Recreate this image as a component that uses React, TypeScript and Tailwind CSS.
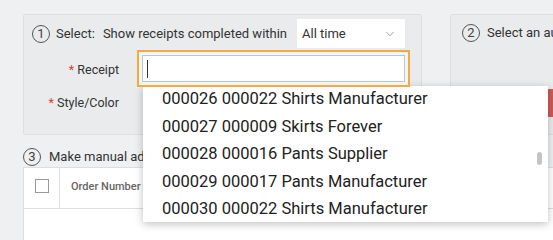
import { ChevronDown } from 'lucide-react'

const items = [
  '000026 000022 Shirts Manufacturer',
  '000027 000009 Skirts Forever',
  '000028 000016 Pants Supplier',
  '000029 000017 Pants Manufacturer',
  '000030 000022 Shirts Manufacturer',
]

function Step({ n }: { n: number }) {
  return (
    <span className="flex h-[18px] w-[18px] shrink-0 items-center justify-center rounded-full border border-[#555] text-[13px] leading-none text-[#444]">
      {n}
    </span>
  )
}

export default function App() {
  return (
    <div
      className="relative h-[240px] w-[553px] overflow-hidden bg-[#eef0f1] text-[#333]"
      style={{ fontFamily: 'Roboto, "Liberation Sans", sans-serif' }}
    >
      <div className="flex gap-[28px] pl-[23px] pt-[14px]">
        {/* panel 1 */}
        <div className="h-[121px] w-[399px] shrink-0 rounded-[2px] border border-[#dde0e2] bg-[#e9ebec]">
          <div className="mt-[4px] flex h-[29px] items-center whitespace-nowrap pl-[8px]">
            <Step n={1} />
            <span className="ml-[6px] text-[13px]">Select:</span>
            <span className="ml-[8px] text-[13px]">Show receipts completed within</span>
            <div className="ml-auto mr-[16px] flex h-[29px] w-[108px] shrink-0 items-center justify-between bg-white pl-[5px] pr-[8px] text-[13px]">
              <span>All time</span>
              <ChevronDown className="h-[14px] w-[14px] text-[#999]" strokeWidth={1.5} />
            </div>
          </div>
          <div className="mt-[2px] flex items-center">
            <div className="w-[95px] whitespace-nowrap pt-[4px] text-right text-[12.5px]">
              <span className="text-[#e0393e]">*</span> Receipt
            </div>
            <div className="relative z-20 ml-[18px] h-[37px] w-[273px] border-2 border-[#f2a94a] bg-[#fdf5ea] p-[3px]">
              <div className="flex h-full w-full items-center border border-[#a9c8e8] bg-white pl-[4px]">
                <span className="h-[18px] w-px bg-[#333]" />
              </div>
            </div>
          </div>
          <div className="mt-[1px] flex">
            <div className="w-[95px] whitespace-nowrap pt-[6px] text-right text-[12.5px]">
              <span className="text-[#e0393e]">*</span> Style/Color
            </div>
          </div>
        </div>

        {/* panel 2 */}
        <div className="h-[121px] w-[200px] shrink-0 rounded-[2px] border border-[#dde0e2] bg-[#e9ebec]">
          <div className="mt-[8px] flex items-center whitespace-nowrap pl-[11px]">
            <Step n={2} />
            <span className="ml-[7px] text-[13px]">Select an audit</span>
          </div>
          <div className="ml-[96px] mt-[46px] h-[28px] w-[90px] rounded-[2px] bg-[#cf5a55]" />
        </div>
      </div>

      {/* step 3 */}
      <div className="mt-[12px] flex items-center whitespace-nowrap pl-[23px]">
        <Step n={3} />
        <span className="ml-[8px] text-[13px]">Make manual adjustments</span>
      </div>
      <div className="ml-[23px] w-[560px] border border-[#dcdfe1] bg-white">
        <div className="flex h-[41px] items-center border-b border-[#dcdfe1]">
          <div className="flex h-full w-[36px] items-center justify-center border-r border-[#dcdfe1]">
            <span className="mb-[3px] h-[14px] w-[14px] border border-[#999] bg-white" />
          </div>
          <span className="ml-[11px] whitespace-nowrap text-[11px] font-medium text-[#666]">Order Number</span>
          <span className="ml-[392px] text-[11px] font-medium text-[#666]">b</span>
        </div>
        <div className="h-[40px]" />
      </div>

      {/* dropdown overlay */}
      <div className="absolute left-[143px] top-[86px] z-10 h-[136px] w-[405px] overflow-hidden bg-white shadow-[0_2px_8px_rgba(0,0,0,0.25)]">
        <div className="-mt-[1px] pl-[19px]">
          {items.map((t) => (
            <div key={t} className="h-[27.5px] whitespace-nowrap text-[16.5px] leading-[27.5px] text-[#222]">
              {t}
            </div>
          ))}
        </div>
        <div className="absolute right-[6px] top-[66px] h-[13px] w-[5px] rounded-full bg-[#c4c4c4]" />
      </div>
    </div>
  )
}
